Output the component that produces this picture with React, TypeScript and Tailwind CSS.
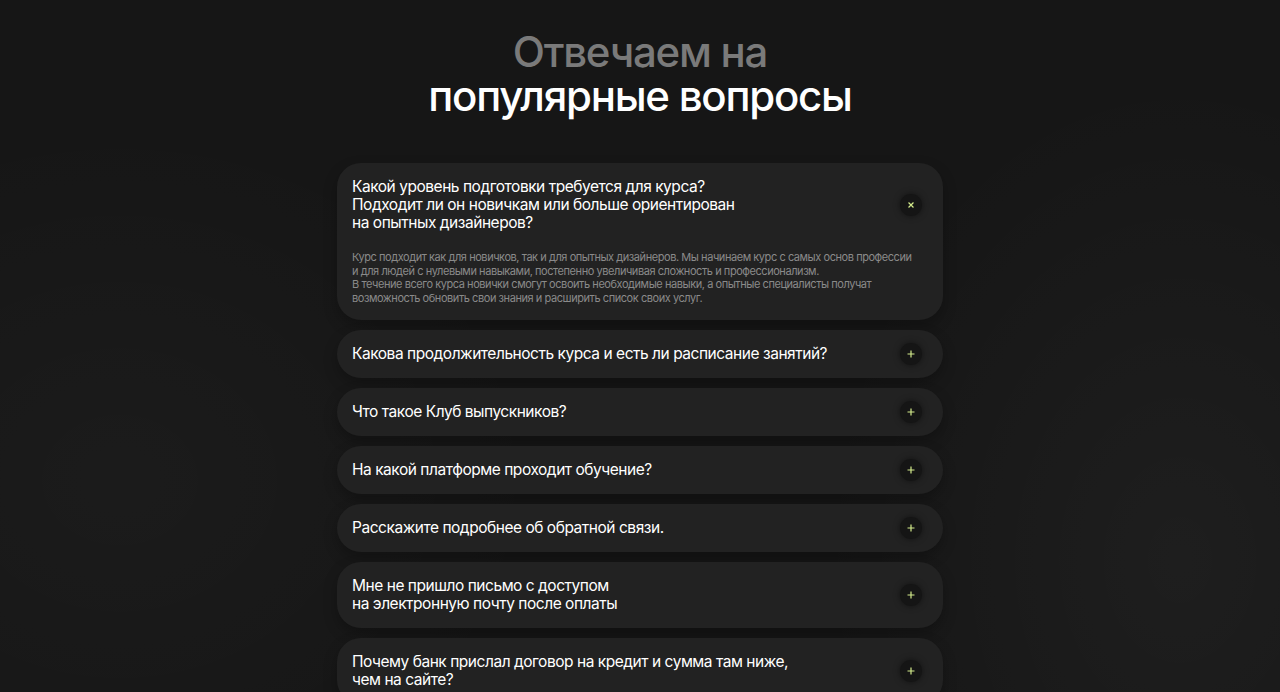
import React from 'react';

type Faq = {
  q: string[];
  a?: string[];
};

const faqs: Faq[] = [
  {
    q: [
      'Какой уровень подготовки требуется для курса?',
      'Подходит ли он новичкам или больше ориентирован',
      'на опытных дизайнеров?',
    ],
    a: [
      'Курс подходит как для новичков, так и для опытных дизайнеров. Мы начинаем курс с самых основ профессии и для людей с нулевыми навыками, постепенно увеличивая сложность и профессионализм.',
      'В течение всего курса новички смогут освоить необходимые навыки, а опытные специалисты получат возможность обновить свои знания и расширить список своих услуг.',
    ],
  },
  { q: ['Какова продолжительность курса и есть ли расписание занятий?'] },
  { q: ['Что такое Клуб выпускников?'] },
  { q: ['На какой платформе проходит обучение?'] },
  { q: ['Расскажите подробнее об обратной связи.'] },
  { q: ['Мне не пришло письмо с доступом', 'на электронную почту после оплаты'] },
  { q: ['Почему банк прислал договор на кредит и сумма там ниже,', 'чем на сайте?'] },
];

function ToggleIcon({ open }: { open: boolean }) {
  return (
    <span className="-my-[2px] flex h-[22px] w-[22px] shrink-0 items-center justify-center rounded-full bg-[#151515] shadow-[0_0_6px_rgba(0,0,0,0.5)]">
      <svg width="8" height="8" viewBox="0 0 8 8" className={open ? 'rotate-45' : ''}>
        <path d="M4 0.5V7.5M0.5 4H7.5" stroke="#d4ec8c" strokeWidth="1.2" />
      </svg>
    </span>
  );
}

function FaqCard({ item }: { item: Faq }) {
  const open = !!item.a;
  return (
    <div className="rounded-[24px] bg-[#222222] px-[15px] py-[15px] shadow-[0_6px_14px_rgba(0,0,0,0.25)]">
      <div className="flex items-center justify-between gap-4">
        <p className="text-[15.5px] leading-[18px] tracking-[-0.03em] text-white">
          {item.q.map((line, i) => (
            <React.Fragment key={i}>
              {i > 0 && <br />}
              {line}
            </React.Fragment>
          ))}
        </p>
        <div className="pr-[6px]">
          <ToggleIcon open={open} />
        </div>
      </div>
      {item.a && (
        <div className="mt-[19px] max-w-[566px] text-[11px] leading-[13.5px] tracking-[-0.04em] text-[#8a8a8a]">
          {item.a.map((p, i) => (
            <p key={i}>{p}</p>
          ))}
        </div>
      )}
    </div>
  );
}

export default function App() {
  return (
    <div className="relative min-h-screen w-full overflow-hidden bg-[#161616] font-['Inter','Noto_Sans',sans-serif]">
      <div className="pointer-events-none absolute inset-0 bg-[radial-gradient(ellipse_520px_700px_at_1180px_560px,rgba(255,255,255,0.035),transparent_70%),radial-gradient(ellipse_620px_520px_at_120px_480px,rgba(255,255,255,0.025),transparent_70%)]" />
      <div className="relative flex flex-col items-center pt-[30px]">
        <h2 className="text-center text-[42px] font-medium leading-[44px] tracking-[-0.03em]">
          <span className="text-[#7a7a7a]">Отвечаем на</span>
          <br />
          <span className="text-white">популярные вопросы</span>
        </h2>
        <div className="mt-[45px] flex w-[606px] flex-col gap-[10px]">
          {faqs.map((f, i) => (
            <FaqCard key={i} item={f} />
          ))}
        </div>
      </div>
    </div>
  );
}
